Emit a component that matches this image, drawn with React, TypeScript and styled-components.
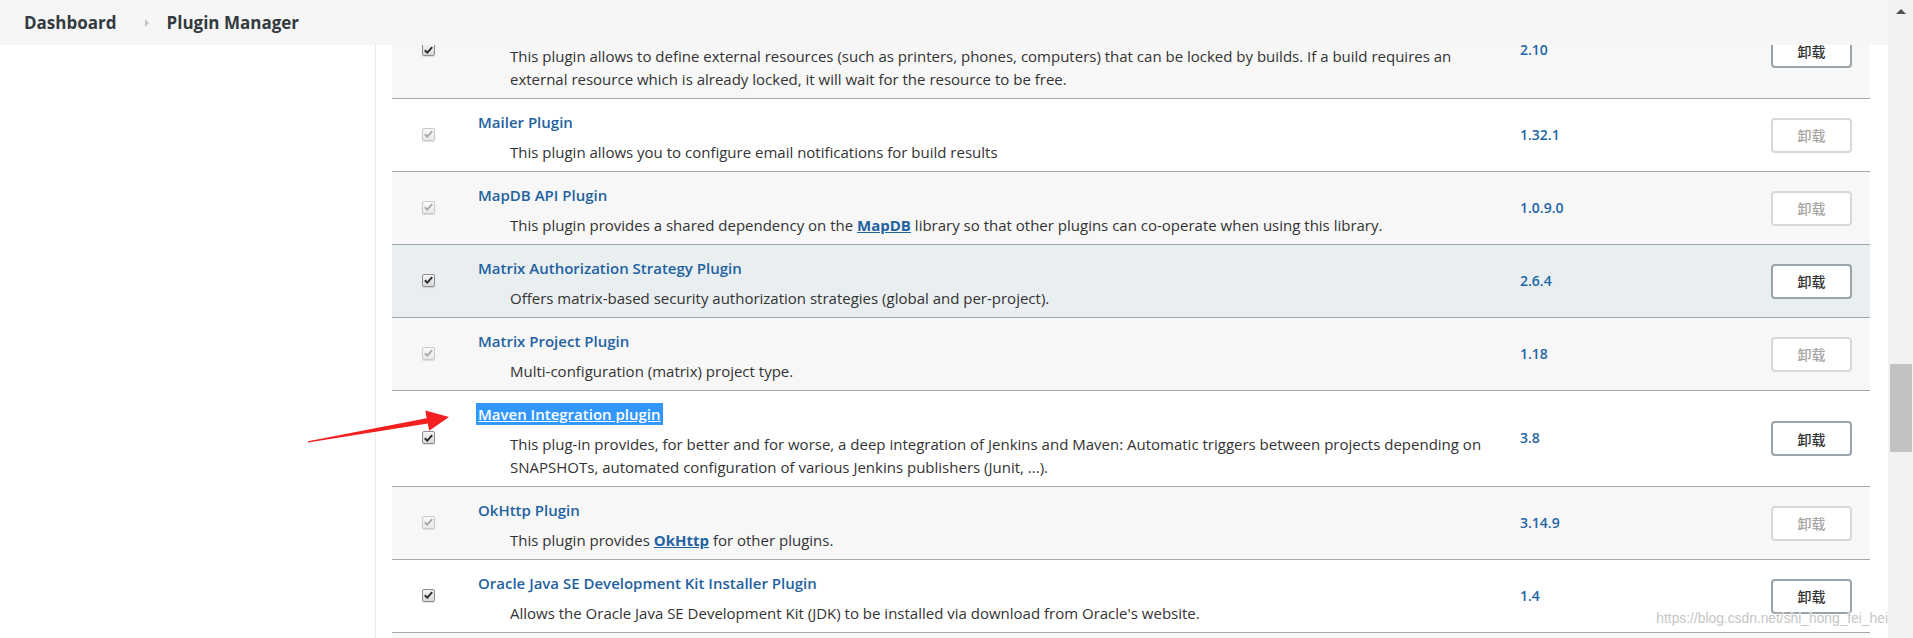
import React, { useLayoutEffect, useRef } from "react";
import styled, { createGlobalStyle } from "styled-components";

const GlobalStyle = createGlobalStyle`
  html, body { margin: 0; padding: 0; background: #ffffff; }
  body {
    font-family: "Open Sans", "Noto Sans", "Noto Sans CJK SC", sans-serif;
    color: #333333;
    overflow: hidden;
  }
  #root { height: 638px; }
`;

const Screen = styled.div`
  position: relative;
  display: flex;
  width: 1913px;
  height: 638px;
  overflow: hidden;
`;

const Page = styled.div`
  flex: 1;
  min-width: 0;
  display: flex;
  flex-direction: column;
`;

const Header = styled.header`
  flex: none;
  height: 45px;
  display: flex;
  align-items: center;
  padding-left: 24px;
  background: #f6f6f6;
`;

const Crumb = styled.span`
  font-size: 17px;
  font-weight: 700;
  color: #333a40;
`;

const CrumbSep = styled.span`
  width: 0;
  height: 0;
  margin: 0 18px 0 28px;
  border-top: 4px solid transparent;
  border-bottom: 4px solid transparent;
  border-left: 4px solid #c4c4c4;
`;

const Body = styled.div`
  flex: 1;
  min-height: 0;
  display: flex;
`;

const Sidebar = styled.aside`
  flex: none;
  width: 375px;
  border-right: 1px solid #ebebeb;
`;

const Content = styled.main`
  flex: 1;
  min-width: 0;
  overflow: hidden;
  padding: 0 18px 0 16px;
`;

const Table = styled.div`
  display: flex;
  flex-direction: column;
`;

type Tone = "white" | "gray" | "hover";

const toneBg: Record<Tone, string> = {
  white: "#ffffff",
  gray: "#f7f7f7",
  hover: "#e9eef1",
};

const Row = styled.div<{ $tone: Tone }>`
  display: grid;
  grid-template-columns: 72px 1fr 265px 81px;
  padding-right: 18px;
  border-bottom: 1px solid #a0a9b0;
  background: ${(p) => toneBg[p.$tone]};
`;

const CheckCell = styled.div`
  display: flex;
  align-items: center;
  justify-content: center;
  padding-bottom: 2px;
`;

const CheckBox = styled.span<{ $disabled?: boolean }>`
  box-sizing: border-box;
  width: 13px;
  height: 13px;
  border-radius: 2px;
  border: 1px solid ${(p) => (p.$disabled ? "#c9c9c9" : "#8e8e8e")};
  background: ${(p) =>
    p.$disabled
      ? "linear-gradient(#fafafa, #e9e9e9)"
      : "linear-gradient(#f4f4f4, #d8d8d8)"};
  box-shadow: 0 1px 1px rgba(0, 0, 0, 0.12);
  display: flex;
  align-items: center;
  justify-content: center;
  color: ${(p) => (p.$disabled ? "#a9a9a9" : "#2b2b2b")};
`;

const InfoCell = styled.div`
  padding: 12px 14px 7px;
  min-width: 0;
  font-size: 15px;
`;

const Name = styled.a`
  display: block;
  font-size: 15px;
  line-height: 22px;
  font-weight: 600;
  color: #1f62a0;
  text-decoration: none;
`;

const Selected = styled.span`
  background: #3297fd;
  color: #ffffff;
  text-decoration: underline;
  padding: 1px 2px 1px;
  margin-left: -2px;
`;

const Desc = styled.div`
  margin-top: 8px;
  padding-left: 32px;
  font-size: 15px;
  line-height: 23px;
  color: #333333;
`;

const DescLink = styled.a`
  font-weight: 700;
  color: #1f62a0;
  text-decoration: underline;
`;

const VersionCell = styled.div`
  display: flex;
  align-items: center;
  padding-left: 14px;
  padding-bottom: 2px;
  font-size: 14px;
  font-weight: 600;
  color: #2266a6;
`;

const ButtonCell = styled.div`
  display: flex;
  align-items: center;
`;

const Uninstall = styled.button<{ $disabled?: boolean }>`
  box-sizing: border-box;
  width: 81px;
  height: 35px;
  padding: 0;
  border-radius: 4px;
  border: 2px solid ${(p) => (p.$disabled ? "#d4d9dc" : "#98a3ab")};
  background: #ffffff;
  font-family: "Noto Sans CJK SC", sans-serif;
  font-size: 14px;
  font-weight: 500;
  color: ${(p) => (p.$disabled ? "#a6a6a6" : "#333333")};
`;

const ScrollTrack = styled.div`
  position: relative;
  flex: none;
  width: 25px;
  height: 638px;
  background: #f1f1f1;
`;

const ScrollArrow = styled.span`
  position: absolute;
  top: 9px;
  left: 8px;
  width: 0;
  height: 0;
  border-left: 5px solid transparent;
  border-right: 5px solid transparent;
  border-bottom: 5px solid #505050;
`;

const ScrollThumb = styled.div<{ $top: number; $height: number }>`
  position: absolute;
  left: 2px;
  right: 1px;
  top: ${(p) => p.$top}px;
  height: ${(p) => p.$height}px;
  background: #c1c1c1;
`;

const ArrowMark = styled.svg`
  position: absolute;
  left: 300px;
  top: 400px;
  width: 160px;
  height: 50px;
  pointer-events: none;
`;

const Watermark = styled.div`
  position: absolute;
  right: 25px;
  bottom: 11px;
  font-family: "Liberation Sans", Arial, sans-serif;
  font-size: 13.8px;
  line-height: 16px;
  color: #c6c6c6;
  text-shadow: 0 0 2px #ffffff, 0 0 1px #ffffff;
  pointer-events: none;
`;

const CheckMark = () => (
  <svg width="9" height="8" viewBox="0 0 9 8">
    <path
      d="M0.8 4.2 L3.3 6.6 L8.2 1.2"
      fill="none"
      stroke="currentColor"
      strokeWidth="1.9"
      strokeLinejoin="miter"
    />
  </svg>
);

type Plugin = {
  name: string;
  desc: React.ReactNode;
  version: string;
  locked: boolean;
  tone: Tone;
  selected?: boolean;
};

const plugins: Plugin[] = [
  {
    name: "Lockable Resources plugin",
    desc:
      "This plugin allows to define external resources (such as printers, phones, computers) that can be locked by builds. If a build requires an external resource which is already locked, it will wait for the resource to be free.",
    version: "2.10",
    locked: false,
    tone: "gray",
  },
  {
    name: "Mailer Plugin",
    desc: "This plugin allows you to configure email notifications for build results",
    version: "1.32.1",
    locked: true,
    tone: "white",
  },
  {
    name: "MapDB API Plugin",
    desc: (
      <>
        This plugin provides a shared dependency on the <DescLink>MapDB</DescLink> library so
        that other plugins can co-operate when using this library.
      </>
    ),
    version: "1.0.9.0",
    locked: true,
    tone: "gray",
  },
  {
    name: "Matrix Authorization Strategy Plugin",
    desc: "Offers matrix-based security authorization strategies (global and per-project).",
    version: "2.6.4",
    locked: false,
    tone: "hover",
  },
  {
    name: "Matrix Project Plugin",
    desc: "Multi-configuration (matrix) project type.",
    version: "1.18",
    locked: true,
    tone: "gray",
  },
  {
    name: "Maven Integration plugin",
    desc:
      "This plug-in provides, for better and for worse, a deep integration of Jenkins and Maven: Automatic triggers between projects depending on SNAPSHOTs, automated configuration of various Jenkins publishers (Junit, ...).",
    version: "3.8",
    locked: false,
    tone: "white",
    selected: true,
  },
  {
    name: "OkHttp Plugin",
    desc: (
      <>
        This plugin provides <DescLink>OkHttp</DescLink> for other plugins.
      </>
    ),
    version: "3.14.9",
    locked: true,
    tone: "gray",
  },
  {
    name: "Oracle Java SE Development Kit Installer Plugin",
    desc: "Allows the Oracle Java SE Development Kit (JDK) to be installed via download from Oracle's website.",
    version: "1.4",
    locked: false,
    tone: "white",
  },
  {
    name: "OWASP Markup Formatter Plugin",
    desc: "Uses the OWASP Java HTML Sanitizer to allow safe-seeming HTML markup to be entered in project descriptions and the like.",
    version: "2.1",
    locked: true,
    tone: "gray",
  },
];

export default function App() {
  const scrollRef = useRef<HTMLElement | null>(null);

  useLayoutEffect(() => {
    if (scrollRef.current) scrollRef.current.scrollTop = 42;
  }, []);

  return (
    <>
      <GlobalStyle />
      <Screen>
        <Page>
          <Header>
            <Crumb>Dashboard</Crumb>
            <CrumbSep />
            <Crumb>Plugin Manager</Crumb>
          </Header>
          <Body>
            <Sidebar />
            <Content ref={scrollRef as React.RefObject<HTMLElement>}>
              <Table>
                {plugins.map((p) => (
                  <Row key={p.name} $tone={p.tone}>
                    <CheckCell>
                      <CheckBox $disabled={p.locked}>
                        <CheckMark />
                      </CheckBox>
                    </CheckCell>
                    <InfoCell>
                      <Name>{p.selected ? <Selected>{p.name}</Selected> : p.name}</Name>
                      <Desc>{p.desc}</Desc>
                    </InfoCell>
                    <VersionCell>{p.version}</VersionCell>
                    <ButtonCell>
                      <Uninstall $disabled={p.locked} disabled={p.locked}>
                        卸载
                      </Uninstall>
                    </ButtonCell>
                  </Row>
                ))}
              </Table>
            </Content>
          </Body>
        </Page>
        <ScrollTrack>
          <ScrollArrow />
          <ScrollThumb $top={364} $height={88} />
        </ScrollTrack>
        <ArrowMark viewBox="0 0 160 50">
          <polygon
            points="8,41.2 126.6,18.3 125.4,10.6 149,17 129.2,30.8 127.8,23.6 8,42.4"
            fill="#f41f1f"
          />
        </ArrowMark>
        <Watermark>https://blog.csdn.net/shi_hong_fei_hei</Watermark>
      </Screen>
    </>
  );
}
